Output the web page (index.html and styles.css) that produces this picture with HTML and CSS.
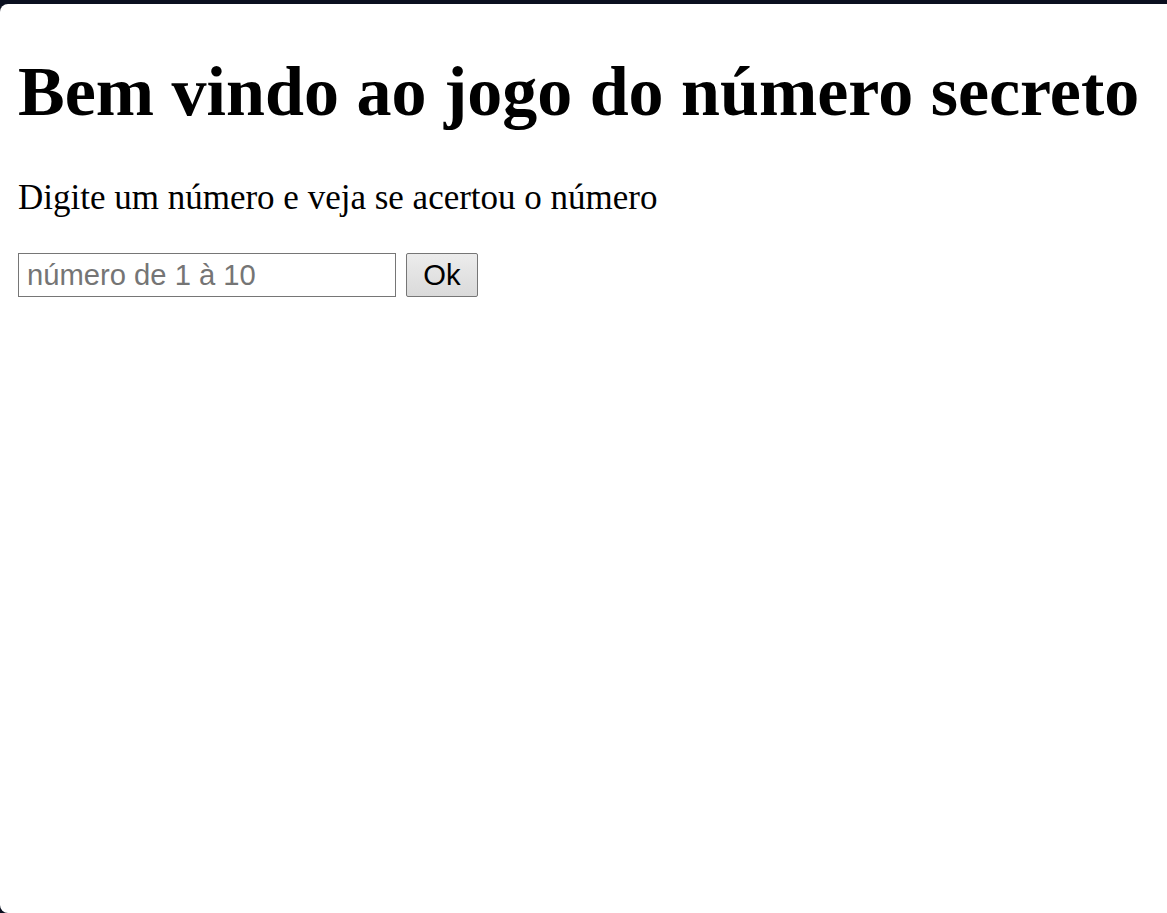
FILE: index.html
```html
<!DOCTYPE html>
<html lang="pt-BR">
<head>
<meta charset="utf-8">
<title>Jogo do número secreto</title>
<link rel="stylesheet" href="styles.css">
</head>
<body>
<div class="page">
  <h1 class="title">Bem vindo ao jogo do número secreto</h1>
  <p class="lead">Digite um número e veja se acertou o número</p>
  <div class="form-row">
    <input class="guess" type="number" placeholder="número de 1 à 10">
    <button class="ok" type="button">Ok</button>
  </div>
</div>
</body>
</html>
```
FILE: styles.css
```css
html {
  background: #0a0f1f;
}
body {
  margin: 0;
  overflow: hidden;
}
.page {
  margin-top: 4px;
  min-height: 909px;
  background: #ffffff;
  border-radius: 8px 0 0 8px;
  padding: 0 18px;
  box-sizing: border-box;
  display: flow-root;
  font-family: "Liberation Serif", "Times New Roman", serif;
  color: #000;
}
.title {
  margin: 48px 0 46px;
  font-size: 70px;
  line-height: 80px;
  font-weight: bold;
  white-space: nowrap;
}
.lead {
  margin: 0 0 35px;
  font-size: 35px;
  line-height: 40px;
}
.form-row {
  display: flex;
  align-items: center;
  gap: 10px;
}
.guess {
  width: 378px;
  height: 44px;
  box-sizing: border-box;
  margin: 0;
  border: 1px solid #767676;
  border-radius: 0;
  padding: 0 8px;
  font-family: "Liberation Sans", Arial, sans-serif;
  font-size: 29.2px;
  color: #000;
  background: #fff;
  outline: none;
  -moz-appearance: textfield;
  appearance: textfield;
}
.guess::placeholder {
  color: #757575;
}
.guess::-webkit-outer-spin-button,
.guess::-webkit-inner-spin-button {
  -webkit-appearance: none;
  margin: 0;
}
.ok {
  width: 72px;
  height: 44px;
  box-sizing: border-box;
  margin: 0;
  padding: 0;
  border: 1px solid #767676;
  border-radius: 2px;
  background: linear-gradient(#ececec, #dadada);
  font-family: "Liberation Sans", Arial, sans-serif;
  font-size: 29.2px;
  color: #000;
}
```
